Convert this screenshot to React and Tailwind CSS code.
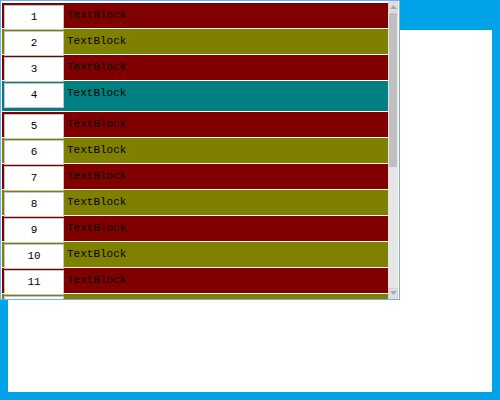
import React from "react";

const rows = [
  { n: 1, bg: "bg-[#800000]" },
  { n: 2, bg: "bg-[#808000]" },
  { n: 3, bg: "bg-[#800000]" },
  { n: 4, bg: "bg-[#008080]", tall: true },
  { n: 5, bg: "bg-[#800000]" },
  { n: 6, bg: "bg-[#808000]" },
  { n: 7, bg: "bg-[#800000]" },
  { n: 8, bg: "bg-[#808000]" },
  { n: 9, bg: "bg-[#800000]" },
  { n: 10, bg: "bg-[#808000]" },
  { n: 11, bg: "bg-[#800000]" },
  { n: 12, bg: "bg-[#808000]" },
];

const Arrow = ({ down }) => (
  <div className="h-[10px] w-full border border-[#d4d4d4] bg-[#e0e0e0] flex items-center justify-center">
    <svg width="7" height="4" viewBox="0 0 7 4">
      <path d={down ? "M0 0 H7 L3.5 4 Z" : "M0 4 H7 L3.5 0 Z"} fill="#a8a8a8" />
    </svg>
  </div>
);

const Row = ({ n, bg, tall }) => (
  <div className={`${bg} ${tall ? "h-[30px]" : "h-[25px]"} mb-[1px] flex items-start pl-[2px] shrink-0`}>
    {/* textbox hangs 2px below the item, over the next one */}
    <div className="relative z-10 mt-[2px] h-[25px] w-[60px] shrink-0 bg-white border border-[#c4c4c4] flex items-center justify-center text-[11px] text-black">
      {n}
    </div>
    <div className="ml-[3px] leading-[25px] text-[11px] text-black">TextBlock</div>
  </div>
);

export default function App() {
  return (
    <div className="relative w-[500px] h-[400px] bg-[#00a2e8] pt-[30px] px-[8px] pb-[8px] font-['Liberation_Mono',monospace]">
      <div className="h-full bg-white" />

      {/* list box */}
      <div className="absolute top-0 left-0 w-[400px] h-[300px] bg-white border border-[#6cb0ea] flex overflow-hidden">
        <div className="w-[387px] pl-[1px] pt-[2px] flex flex-col overflow-hidden">
          {rows.map((r) => (
            <Row key={r.n} {...r} />
          ))}
        </div>
        <div className="w-[10px] bg-[#e6e6e6] flex flex-col pt-[1px] pb-[1px]">
          <Arrow />
          <div className="mt-[1px] h-[154px] mx-[1px] bg-[#c0c0c0]" />
          <div className="flex-1" />
          <Arrow down />
        </div>
      </div>
    </div>
  );
}
